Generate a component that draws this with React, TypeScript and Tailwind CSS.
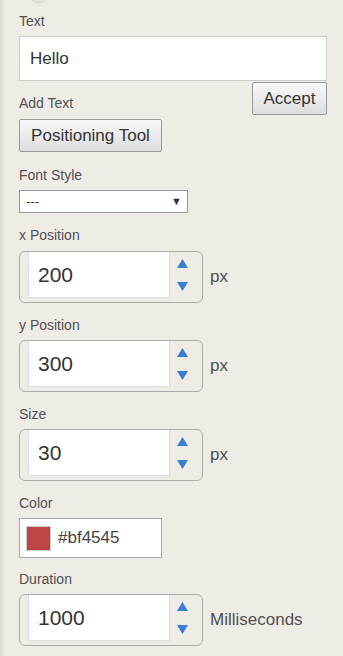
import React from "react";

const Label = ({ children }: { children: React.ReactNode }) => (
  <div className="h-[17px] text-[14px] leading-[19px] text-[#505050]">{children}</div>
);

const Spinner = ({ value, unit }: { value: string; unit: string }) => (
  <div className="flex items-center">
    <div className="flex h-[52px] w-[184px] rounded-[6px] border border-[#aaa] pl-[8px]">
      <div className="flex h-[46px] w-[142px] items-center border border-t-0 border-[#ddd] bg-white pl-[9px] text-[21px] text-[#333]">
        {value}
      </div>
      <div className="flex w-[24px] flex-col items-center justify-center gap-[14px] pb-[4px]">
        <svg width="11" height="9" viewBox="0 0 11 9">
          <polygon points="5.5,0 11,9 0,9" fill="#3a7fd5" />
        </svg>
        <svg width="11" height="9" viewBox="0 0 11 9">
          <polygon points="0,0 11,0 5.5,9" fill="#3a7fd5" />
        </svg>
      </div>
    </div>
    <span className="ml-[7px] text-[17px] text-[#505050]">{unit}</span>
  </div>
);

export default function App() {
  return (
    <div className="relative h-[656px] w-[343px] overflow-hidden bg-[#efece6] font-['Liberation_Sans',Arial,sans-serif]">
      <div className="absolute left-0 top-0 h-full w-[5px] bg-gradient-to-r from-[#d9d6cf] to-[#efece6]" />
      <div className="absolute left-[29px] top-[-14px] h-[17px] w-[20px] rounded-full border border-[#d4d1ca] bg-[#e6e3dc]" />
      <div className="flex flex-col pl-[19px] pr-[16px] pt-[12px]">
        <Label>Text</Label>
        <div className="mt-[7px] flex h-[45px] items-center border border-[#ccc] bg-white pl-[10px] text-[17px] text-[#333]">
          Hello
        </div>
        <div className="flex items-end justify-between">
          <div className="mb-[4px]">
            <Label>Add Text</Label>
          </div>
          <button className="mt-[1px] h-[33px] w-[75px] rounded-[2px] border border-[#999] bg-gradient-to-b from-[#f8f8f8] to-[#dedede] text-[17px] text-[#333]">
            Accept
          </button>
        </div>
        <button className="mt-[4px] h-[33px] w-[143px] rounded-[2px] border border-[#999] bg-gradient-to-b from-[#f8f8f8] to-[#dedede] text-[17px] text-[#333]">
          Positioning Tool
        </button>
        <div className="mt-[14px]">
          <Label>Font Style</Label>
        </div>
        <div className="mt-[7px] flex h-[23px] w-[169px] items-center justify-between border border-[#999] bg-white pl-[6px] pr-[5px] text-[13px] text-[#333]">
          <span>---</span>
          <span className="text-[11px]">▼</span>
        </div>
        <div className="mt-[13px]">
          <Label>x Position</Label>
        </div>
        <div className="mt-[8px]">
          <Spinner value="200" unit="px" />
        </div>
        <div className="mt-[13px]">
          <Label>y Position</Label>
        </div>
        <div className="mt-[7px]">
          <Spinner value="300" unit="px" />
        </div>
        <div className="mt-[13px]">
          <Label>Size</Label>
        </div>
        <div className="mt-[7px]">
          <Spinner value="30" unit="px" />
        </div>
        <div className="mt-[13px]">
          <Label>Color</Label>
        </div>
        <div className="mt-[7px] flex h-[40px] w-[143px] items-center border border-[#aaa] bg-white pl-[6px]">
          <div className="h-[25px] w-[25px] border border-[#ccc] bg-[#bf4545]" />
          <span className="ml-[7px] text-[17px] text-[#444]">#bf4545</span>
        </div>
        <div className="mt-[12px]">
          <Label>Duration</Label>
        </div>
        <div className="mt-[7px]">
          <Spinner value="1000" unit="Milliseconds" />
        </div>
      </div>
    </div>
  );
}
